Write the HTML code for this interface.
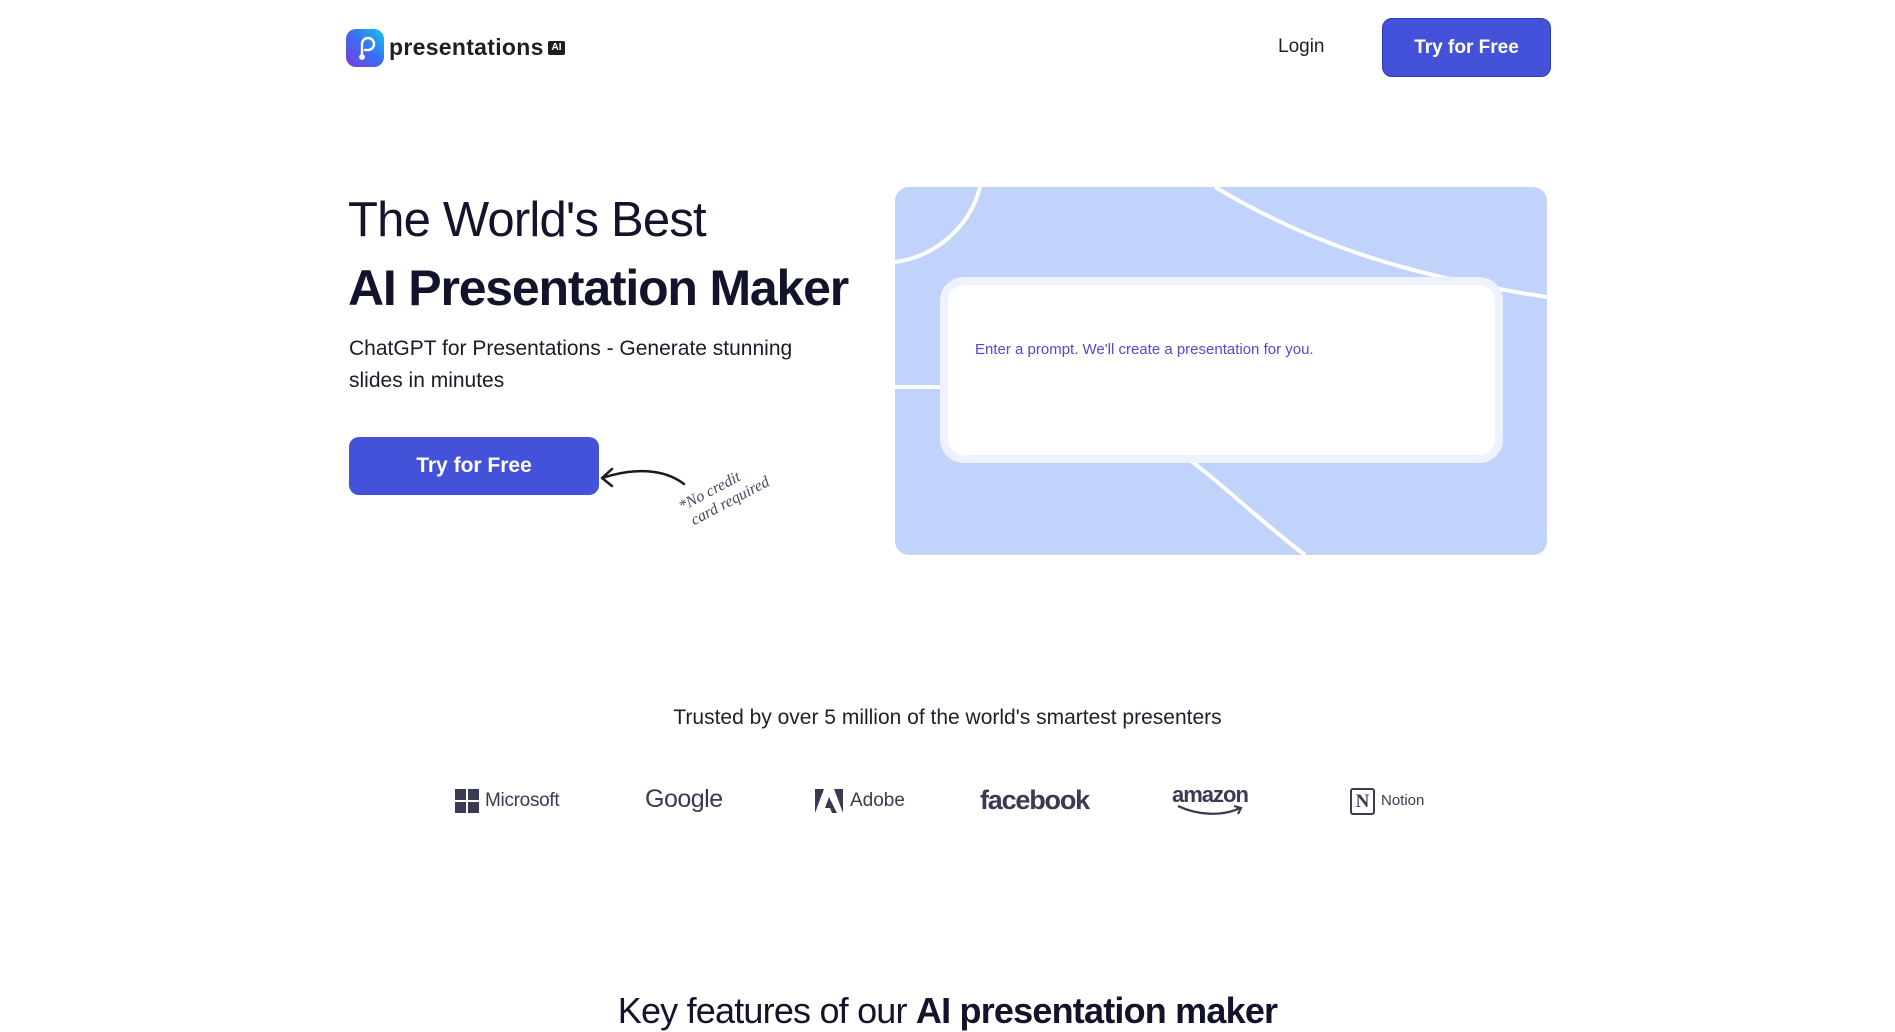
<!DOCTYPE html>
<html><head><meta charset="utf-8"><style>
*{margin:0;padding:0;box-sizing:border-box}
body{width:1895px;height:1025px;overflow:hidden;background:#fff;font-family:"Liberation Sans",sans-serif;color:#13132b;position:relative}
.a{position:absolute}
.btn{background:#4352d8;color:#fff;border-radius:10px;display:flex;align-items:center;justify-content:center;font-weight:bold}
</style></head><body>
<div class="a" style="left:346px;top:29px;width:38px;height:38px;border-radius:10px;background:linear-gradient(225deg,#12c6f2,#3a6cf0 50%,#7a3de0)"></div>
<svg class="a" style="left:346px;top:29px" width="38" height="38"><path d="M16 29 V15 a6 6 0 1 1 6 6 h-3" fill="none" stroke="#fff" stroke-width="2.4" stroke-linecap="round"/><circle cx="16" cy="28" r="2" fill="none" stroke="#fff" stroke-width="1.8"/></svg>
<div class="a" style="left:389px;top:34px;font-size:23px;font-weight:bold;color:#1e1e24;letter-spacing:0.3px">presentations</div>
<div class="a" style="left:548px;top:41px;width:17px;height:14px;background:#1e1e24;color:#fff;font-size:10px;font-weight:bold;text-align:center;line-height:14px;border-radius:2px">AI</div>
<div class="a" style="left:1278px;top:36px;font-size:19px;color:#1e1e2e">Login</div>
<div class="a btn" style="left:1382px;top:18px;width:169px;height:59px;font-size:19px;border:1px solid #2c3bb0">Try for Free</div>

<div class="a" style="left:348px;top:192px;font-size:49px;color:#13132b;letter-spacing:-0.8px">The World's Best</div>
<div class="a" style="left:348px;top:259px;font-size:50px;font-weight:bold;color:#13132b;letter-spacing:-1.2px">AI Presentation Maker</div>
<div class="a" style="left:349px;top:333px;font-size:21px;line-height:32px;color:#1a1a2a;width:480px">ChatGPT for Presentations - Generate stunning slides in minutes</div>
<div class="a btn" style="left:349px;top:437px;width:250px;height:58px;font-size:21px">Try for Free</div>
<svg class="a" style="left:598px;top:460px" width="90" height="40"><path d="M86 24 C65 8 35 8 4 18 M4 18 L14 9 M4 18 L14 26" fill="none" stroke="#1a1a1a" stroke-width="2.5" stroke-linecap="round"/></svg>
<div class="a" style="left:676px;top:500px;font-size:16px;color:#444a66;transform:rotate(-28deg);transform-origin:0 0;font-family:'Liberation Serif',serif;font-style:italic;line-height:18px">*No credit<br>&nbsp;card required</div>

<div class="a" style="left:895px;top:187px;width:652px;height:368px;background:#c1d3fb;border-radius:14px;overflow:hidden">
<svg width="652" height="368" style="position:absolute;left:0;top:0"><g fill="none" stroke="#fff" stroke-width="4"><path d="M0 75 C40 70 75 40 85 0"/><path d="M320 0 C420 60 520 90 652 110"/><path d="M0 200 L60 200"/><path d="M290 270 C320 290 360 330 410 368"/></g></svg>
<div style="position:absolute;left:45px;top:90px;width:563px;height:186px;background:#fff;border:8px solid #eef2fc;border-radius:24px"></div>
<div style="position:absolute;left:80px;top:154px;font-size:15px;color:#5b46cf">Enter a prompt. We'll create a presentation for you.</div>
</div>

<div class="a" style="left:0;width:1895px;top:706px;text-align:center;font-size:21px;color:#1e1e2e">Trusted by over 5 million of the world's smartest presenters</div>
<div class="a" style="left:455px;top:789px;width:24px;height:24px;display:grid;grid-template-columns:1fr 1fr;gap:2px"><i style="background:#3a3a52"></i><i style="background:#3a3a52"></i><i style="background:#3a3a52"></i><i style="background:#3a3a52"></i></div>
<div class="a" style="left:485px;top:790px;font-size:19px;color:#3a3a52;letter-spacing:-0.3px">Microsoft</div>
<div class="a" style="left:645px;top:785px;font-size:25px;color:#3a3a52;letter-spacing:-0.5px">Google</div>
<svg class="a" style="left:815px;top:789px" width="28" height="24"><path d="M0 24 L9 0 H0Z M19 0 H28 V24Z M14 8 L22 24 H17 L15 19 H10Z" fill="#3a3a52"/></svg>
<div class="a" style="left:850px;top:790px;font-size:19px;color:#3a3a52">Adobe</div>
<div class="a" style="left:980px;top:785px;font-size:27px;font-weight:bold;color:#3a3a52;letter-spacing:-1.2px">facebook</div>
<div class="a" style="left:1172px;top:782px;font-size:22px;font-weight:bold;color:#3a3a52;letter-spacing:-1px">amazon</div>
<svg class="a" style="left:1174px;top:804px" width="76" height="12"><path d="M4 2 C25 12 50 12 66 4 M60 2 L67 4 L64 10" fill="none" stroke="#3a3a52" stroke-width="2.2"/></svg>
<div class="a" style="left:1350px;top:788px;width:25px;height:27px;border:2px solid #3a3a52;border-radius:3px;font-family:'Liberation Serif',serif;font-weight:bold;font-size:19px;text-align:center;line-height:24px;color:#3a3a52">N</div>
<div class="a" style="left:1381px;top:792px;font-size:15px;color:#3a3a52">Notion</div>

<div class="a" style="left:0;width:1895px;top:990px;text-align:center;font-size:36px;color:#13132b;letter-spacing:-0.8px">Key features of our <b>AI presentation maker</b></div>
</body></html>
